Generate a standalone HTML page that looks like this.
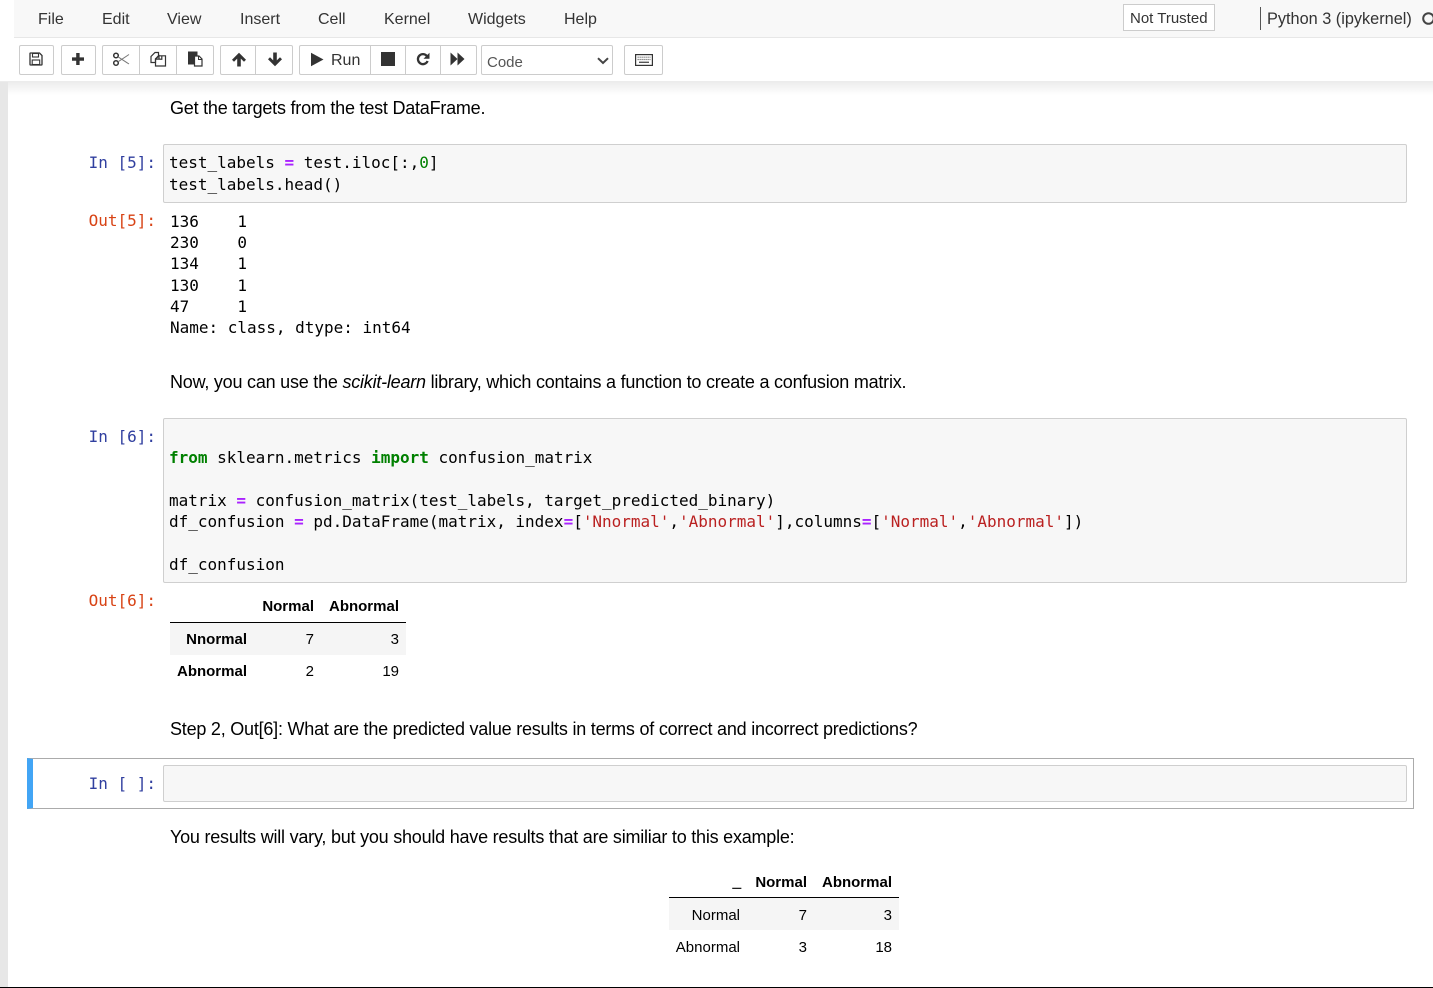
<!DOCTYPE html>
<html><head><meta charset="utf-8">
<style>
html,body{margin:0;padding:0;background:#fff;width:1433px;height:988px;overflow:hidden}
body{position:relative;font-family:"Liberation Sans",Arial,sans-serif;color:#000}
.a{position:absolute}
.t{position:absolute;white-space:pre;line-height:20px}
.m{font-family:"DejaVu Sans Mono",monospace;font-size:16px;letter-spacing:-.01px}
.p{font-size:18px;letter-spacing:-.222px;color:#000}
.in{color:#303f9f;text-align:right;width:140px;left:16px}
.out{color:#d84315;text-align:right;width:140px;left:16px}
.menu{font-size:16px;color:#333}
.cb{position:absolute;background:#f7f7f7;border:1px solid #cfcfcf;border-radius:2px;box-sizing:border-box}
.btn{position:absolute;top:45px;height:30px;box-sizing:border-box;border:1px solid #ccc;background:#fff}
.k{color:#008000;font-weight:bold}.o{color:#aa22ff;font-weight:bold}.s{color:#ba2121}.n{color:#008000}
.th{font-size:15px;font-weight:bold;text-align:right}
.td{font-size:15px;text-align:right}
svg{position:absolute;overflow:visible}
</style></head><body>
<div class="a" style="left:14px;top:0;width:1419px;height:38px;background:#f8f8f8;border-bottom:1px solid #e7e7e7;box-sizing:border-box"></div>
<div class="t menu" style="left:38px;top:10px">File</div>
<div class="t menu" style="left:102px;top:10px">Edit</div>
<div class="t menu" style="left:167px;top:10px">View</div>
<div class="t menu" style="left:240px;top:10px">Insert</div>
<div class="t menu" style="left:318px;top:10px">Cell</div>
<div class="t menu" style="left:384px;top:10px">Kernel</div>
<div class="t menu" style="left:468px;top:10px">Widgets</div>
<div class="t menu" style="left:564px;top:10px">Help</div>
<div class="a" style="left:1123px;top:4px;width:92px;height:27px;border:1px solid #ccc;background:#fff;box-sizing:border-box"></div>
<div class="t" style="left:1130px;top:9px;font-size:15px;color:#333">Not Trusted</div>
<div class="a" style="left:1260px;top:7px;width:1px;height:23px;background:#555"></div>
<div class="t" style="left:1267px;top:9px;font-size:16.3px;color:#333">Python 3 (ipykernel)</div>
<svg style="left:1421px;top:12px" width="12" height="13"><circle cx="7.500" cy="6.500" r="5.300" fill="none" stroke="#444" stroke-width="2"/></svg>

<div class="a" style="left:0;top:81px;width:1433px;height:14px;background:linear-gradient(#ebebeb,#fff)"></div>
<div class="a" style="left:0;top:82px;width:8px;height:906px;background:#e7e7e7"></div>
<div class="a" style="left:0;top:987px;width:1433px;height:1px;background:#000"></div>

<div class="btn" style="left:19px;width:35px;border-radius:2px"></div>
<div class="btn" style="left:61px;width:35px;border-radius:2px"></div>
<div class="btn" style="left:102px;width:38px;border-radius:2px 0 0 2px"></div>
<div class="btn" style="left:139px;width:38px"></div>
<div class="btn" style="left:176px;width:38px;border-radius:0 2px 2px 0"></div>
<div class="btn" style="left:220px;width:36px;border-radius:2px 0 0 2px"></div>
<div class="btn" style="left:255px;width:38px;border-radius:0 2px 2px 0"></div>
<div class="btn" style="left:299px;width:72px;border-radius:2px 0 0 2px"></div>
<div class="btn" style="left:370px;width:36px"></div>
<div class="btn" style="left:405px;width:36px"></div>
<div class="btn" style="left:440px;width:37px;border-radius:0 2px 2px 0"></div>
<div class="btn" style="left:481px;width:132px;border-radius:2px"></div>
<div class="btn" style="left:624px;width:39px;border-radius:2px"></div>

<!-- save -->
<svg style="left:29px;top:52px" width="14" height="14" viewBox="0 0 14 14"><path d="M1.500 1h9l2.500 2.500V12.500a.5.5 0 0 1-.5.5H1.500a.5.500 0 0 1-.5-.5V1.500a.5.500 0 0 1 .5-.5z" fill="none" stroke="#333" stroke-width="1.300"/><rect x="3.500" y="1.500" width="6" height="3.500" fill="none" stroke="#333" stroke-width="1.100"/><rect x="3.200" y="8" width="7.500" height="4.500" fill="none" stroke="#333" stroke-width="1.100"/></svg>
<!-- plus -->
<svg style="left:71px;top:52px" width="14" height="14" viewBox="0 0 14 14"><path d="M5.200 1h3.400v4.400H13v3.300H8.600V13H5.200V8.700H1V5.400h4.200z" fill="#333"/></svg>
<!-- scissors -->
<svg style="left:112px;top:52px" width="18" height="15" viewBox="0 0 18 15" fill="none" stroke="#333"><circle cx="4" cy="3.500" r="2.300" stroke-width="1.500"/><circle cx="4" cy="11" r="2.300" stroke-width="1.500"/><path d="M6 4.800 17 12M6 9.800 17 2.500" stroke-width="1" stroke="#777"/></svg>
<!-- copy -->
<svg style="left:150px;top:51px" width="16" height="16" viewBox="0 0 16 16" fill="none" stroke="#333" stroke-width="1.200"><path d="M5 1.500h3.500v3.200L5.500 8v3.500H1V5.500z"/><path d="M9 4.800h2.800v3.800M5.500 8 9 4.800v3.400H5.500zM5.500 8v7h10V4.800h-3.700v3.400z"/></svg>
<!-- paste -->
<svg style="left:187px;top:50px" width="16" height="17" viewBox="0 0 16 17"><path d="M1 1.500h9.500v4.500H7v8.500H1z" fill="#333"/><path d="M7.500 6h4.500l3 3v7H7.500z" fill="#fff" stroke="#333" stroke-width="1.200"/><path d="M11.500 6v3.500h3.500" fill="none" stroke="#333"/></svg>
<!-- up/down -->
<svg style="left:231px;top:52px" width="16" height="15" viewBox="0 0 16 15"><path d="M8 .8 15 7.800 13 9.800 9.800 6.600V14.500H6.200V6.600L3 9.800 1 7.800z" fill="#333"/></svg>
<svg style="left:267px;top:52px" width="16" height="15" viewBox="0 0 16 15"><path d="M8 14.200 15 7.200 13 5.200 9.800 8.400V.5H6.200V8.400L3 5.200 1 7.200z" fill="#333"/></svg>
<!-- run -->
<svg style="left:310px;top:52px" width="14" height="15" viewBox="0 0 14 15"><path d="M1 .8 13.500 7.500 1 14.200z" fill="#333"/></svg>
<div class="t" style="left:331px;top:51px;font-size:16px;color:#333">Run</div>
<div class="a" style="left:381px;top:52px;width:14px;height:14px;background:#333"></div>
<svg style="left:416px;top:52px" width="14" height="14" viewBox="0 0 14 14"><path d="M11 4.200A5 5 0 1 0 11.600 9" fill="none" stroke="#333" stroke-width="2.300"/><path d="M13.500 .8V6.800H7.500z" fill="#333"/></svg>
<svg style="left:450px;top:52px" width="15" height="14" viewBox="0 0 15 14"><path d="M.5 .5 7.500 7 .5 13.500zM7.500 .5 14.500 7 7.500 13.500z" fill="#333"/></svg>
<div class="t" style="left:487px;top:53px;font-size:15px;color:#555">Code</div>
<svg style="left:597px;top:57px" width="12" height="8" viewBox="0 0 12 8"><path d="M1 1.200 6 6 11 1.200" fill="none" stroke="#444" stroke-width="2"/></svg>
<svg style="left:635px;top:54px" width="18" height="12" viewBox="0 0 18 12"><rect x=".6" y=".6" width="16.800" height="10.800" fill="#fff" stroke="#333" stroke-width="1.200"/><path d="M2.500 3.200h13M2.500 5.500h13" stroke="#777" stroke-width="1.200" stroke-dasharray="1.300 .7"/><path d="M4 8.300h10" stroke="#555" stroke-width="1.400"/></svg>

<div class="t p" style="left:170px;top:98px">Get the targets from the test DataFrame.</div>

<div class="t m in" style="top:153px">In [5]:</div>
<div class="cb" style="left:163px;top:144px;width:1244px;height:59px"></div>
<div class="t m" style="left:169px;top:153px">test_labels <span class="o">=</span> test.iloc[:,<span class="n">0</span>]</div>
<div class="t m" style="left:169px;top:175px">test_labels.head()</div>

<div class="t m out" style="top:211px">Out[5]:</div>
<div class="t m" style="left:170px;top:212px">136    1</div>
<div class="t m" style="left:170px;top:233px">230    0</div>
<div class="t m" style="left:170px;top:254px">134    1</div>
<div class="t m" style="left:170px;top:276px">130    1</div>
<div class="t m" style="left:170px;top:297px">47     1</div>
<div class="t m" style="left:170px;top:318px">Name: class, dtype: int64</div>

<div class="t p" style="left:170px;top:372px">Now, you can use the <i>scikit-learn</i> library, which contains a function to create a confusion matrix.</div>

<div class="t m in" style="top:427px">In [6]:</div>
<div class="cb" style="left:163px;top:418px;width:1244px;height:165px"></div>
<div class="t m" style="left:169px;top:448px"><span class="k">from</span> sklearn.metrics <span class="k">import</span> confusion_matrix</div>
<div class="t m" style="left:169px;top:491px">matrix <span class="o">=</span> confusion_matrix(test_labels, target_predicted_binary)</div>
<div class="t m" style="left:169px;top:512px">df_confusion <span class="o">=</span> pd.DataFrame(matrix, index<span class="o">=</span>[<span class="s">'Nnormal'</span>,<span class="s">'Abnormal'</span>],columns<span class="o">=</span>[<span class="s">'Normal'</span>,<span class="s">'Abnormal'</span>])</div>
<div class="t m" style="left:169px;top:555px">df_confusion</div>

<div class="t m out" style="top:591px">Out[6]:</div>
<div class="a" style="left:170px;top:622px;width:236px;height:1px;background:#000"></div>
<div class="a" style="left:170px;top:623px;width:236px;height:32px;background:#f5f5f5"></div>
<div class="t th" style="left:234px;width:80px;top:597px">Normal</div>
<div class="t th" style="left:319px;width:80px;top:597px">Abnormal</div>
<div class="t th" style="left:167px;width:80px;top:630px">Nnormal</div>
<div class="t td" style="left:234px;width:80px;top:630px">7</div>
<div class="t td" style="left:319px;width:80px;top:630px">3</div>
<div class="t th" style="left:167px;width:80px;top:662px">Abnormal</div>
<div class="t td" style="left:234px;width:80px;top:662px">2</div>
<div class="t td" style="left:319px;width:80px;top:662px">19</div>

<div class="t p" style="left:170px;top:719px">Step 2, Out[6]: What are the predicted value results in terms of correct and incorrect predictions?</div>

<div class="a" style="left:27px;top:758px;width:1387px;height:51px;border:1px solid #ababab;box-sizing:border-box;border-left:6px solid #42a5f5"></div>
<div class="t m in" style="top:774px">In [ ]:</div>
<div class="cb" style="left:163px;top:765px;width:1244px;height:37px"></div>

<div class="t p" style="left:170px;top:827px">You results will vary, but you should have results that are similiar to this example:</div>

<div class="a" style="left:669px;top:897px;width:230px;height:1px;background:#000"></div>
<div class="a" style="left:669px;top:898px;width:230px;height:32px;background:#f5f5f5"></div>
<div class="t th" style="left:661px;width:80px;top:873px;-webkit-text-stroke:.5px #000">_</div>
<div class="t th" style="left:727px;width:80px;top:873px">Normal</div>
<div class="t th" style="left:812px;width:80px;top:873px">Abnormal</div>
<div class="t td" style="left:660px;width:80px;top:906px">Normal</div>
<div class="t td" style="left:727px;width:80px;top:906px">7</div>
<div class="t td" style="left:812px;width:80px;top:906px">3</div>
<div class="t td" style="left:660px;width:80px;top:938px">Abnormal</div>
<div class="t td" style="left:727px;width:80px;top:938px">3</div>
<div class="t td" style="left:812px;width:80px;top:938px">18</div>
</body></html>
